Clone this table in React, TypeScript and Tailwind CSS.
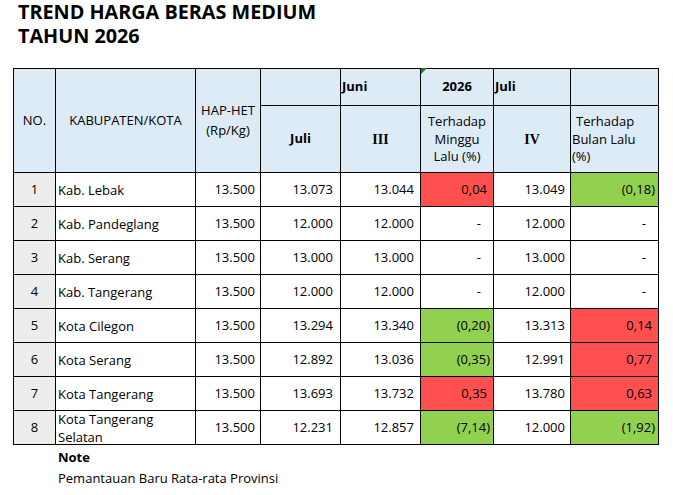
import React from "react";

type Tone = "red" | "green" | "none";
type Row = {
  no: string;
  name: string;
  hap: string;
  juli: string;
  iii: string;
  mg: string;
  mgTone: Tone;
  iv: string;
  bl: string;
  blTone: Tone;
};

const rows: Row[] = [
  { no: "1", name: "Kab. Lebak", hap: "13.500", juli: "13.073", iii: "13.044", mg: "0,04", mgTone: "red", iv: "13.049", bl: "(0,18)", blTone: "green" },
  { no: "2", name: "Kab. Pandeglang", hap: "13.500", juli: "12.000", iii: "12.000", mg: "-", mgTone: "none", iv: "12.000", bl: "-", blTone: "none" },
  { no: "3", name: "Kab. Serang", hap: "13.500", juli: "13.000", iii: "13.000", mg: "-", mgTone: "none", iv: "13.000", bl: "-", blTone: "none" },
  { no: "4", name: "Kab. Tangerang", hap: "13.500", juli: "12.000", iii: "12.000", mg: "-", mgTone: "none", iv: "12.000", bl: "-", blTone: "none" },
  { no: "5", name: "Kota Cilegon", hap: "13.500", juli: "13.294", iii: "13.340", mg: "(0,20)", mgTone: "green", iv: "13.313", bl: "0,14", blTone: "red" },
  { no: "6", name: "Kota Serang", hap: "13.500", juli: "12.892", iii: "13.036", mg: "(0,35)", mgTone: "green", iv: "12.991", bl: "0,77", blTone: "red" },
  { no: "7", name: "Kota Tangerang", hap: "13.500", juli: "13.693", iii: "13.732", mg: "0,35", mgTone: "red", iv: "13.780", bl: "0,63", blTone: "red" },
  { no: "8", name: "Kota Tangerang Selatan", hap: "13.500", juli: "12.231", iii: "12.857", mg: "(7,14)", mgTone: "green", iv: "12.000", bl: "(1,92)", blTone: "green" },
];

function PctCell({ value, tone }: { value: string; tone: Tone }) {
  const bg = tone === "red" ? "bg-[#ff5050]" : tone === "green" ? "bg-[#92d050]" : "bg-white";
  const pad = value === "-" ? "pr-[12px]" : value.startsWith("(") ? "pr-[3px]" : "pr-[6px]";
  return <div className={`${bg} ${pad} flex items-center justify-end`}>{value}</div>;
}

export default function App() {
  return (
    <div
      className="w-[673px] h-[495px] bg-white text-black overflow-hidden"
      style={{ fontFamily: '"Open Sans", "Noto Sans", sans-serif' }}
    >
      <div className="pl-[18px] pt-0 text-[19.8px] leading-[24px] font-bold">
        <div>TREND HARGA BERAS MEDIUM</div>
        <div>TAHUN 2026</div>
      </div>

      <div className="ml-[13px] mt-[20px] w-[646px] grid grid-cols-[41px_139px_64px_79px_79px_72px_76px_87px] grid-rows-[36px_66px_repeat(8,33px)] gap-px p-px bg-black text-[13px]">
        {/* Header row 1 */}
        <div className="row-span-2 bg-[#ddebf7] flex items-center justify-center">NO.</div>
        <div className="row-span-2 bg-[#ddebf7] flex items-center justify-center">KABUPATEN/KOTA</div>
        <div className="row-span-2 bg-[#ddebf7] flex items-center justify-center text-center leading-[20px] pb-[2px]">
          HAP-HET
          <br />
          (Rp/Kg)
        </div>
        <div className="bg-[#ddebf7]"></div>
        <div className="bg-[#ddebf7] flex items-center pl-[1px] font-bold">Juni</div>
        <div className="relative bg-[#ddebf7] flex items-center justify-center font-bold">
          <div className="absolute top-[-1px] left-0 w-0 h-0 border-t-[6px] border-t-[#1e7b2a] border-r-[6px] border-r-transparent"></div>
          2026
        </div>
        <div className="bg-[#ddebf7] flex items-center pl-[1px] font-bold">Juli</div>
        <div className="bg-[#ddebf7]"></div>

        {/* Header row 2 */}
        <div className="bg-[#ddebf7] flex items-center justify-center font-bold">Juli</div>
        <div
          className="bg-[#ddebf7] flex items-center justify-center font-bold text-[14px]"
          style={{ fontFamily: '"Liberation Serif", serif' }}
        >
          III
        </div>
        <div className="bg-[#ddebf7] flex items-center justify-center text-center leading-[17.5px] pt-[1px]">
          Terhadap
          <br />
          Minggu
          <br />
          Lalu (%)
        </div>
        <div
          className="bg-[#ddebf7] flex items-center justify-center font-bold text-[14px]"
          style={{ fontFamily: '"Liberation Serif", serif' }}
        >
          IV
        </div>
        <div className="bg-[#ddebf7] flex flex-col justify-center leading-[17.5px] pl-[1px] pt-[1px]">
          <div className="pl-[4px]">Terhadap</div>
          <div>Bulan Lalu</div>
          <div>(%)</div>
        </div>

        {rows.map((r) => (
          <React.Fragment key={r.no}>
            <div className="bg-[#ededed] flex items-center justify-center">{r.no}</div>
            <div className="bg-white flex items-center pl-[2px] leading-[18px] overflow-hidden">
              {r.no === "8" ? (
                <div>
                  Kota Tangerang
                  <br />
                  Selatan
                </div>
              ) : (
                r.name
              )}
            </div>
            <div className="bg-white flex items-center justify-end pr-[5px]">{r.hap}</div>
            <div className="bg-white flex items-center justify-end pr-[7px]">{r.juli}</div>
            <div className="bg-white flex items-center justify-end pr-[6px]">{r.iii}</div>
            <PctCell value={r.mg} tone={r.mgTone} />
            <div className="bg-white flex items-center justify-end pr-[5px]">{r.iv}</div>
            <PctCell value={r.bl} tone={r.blTone} />
          </React.Fragment>
        ))}
      </div>

      <div className="pl-[58px] mt-[2px] text-[13px]">
        <div className="font-bold leading-[21px]">Note</div>
        <div className="leading-[21px]">Pemantauan Baru Rata-rata Provinsi</div>
      </div>
    </div>
  );
}
